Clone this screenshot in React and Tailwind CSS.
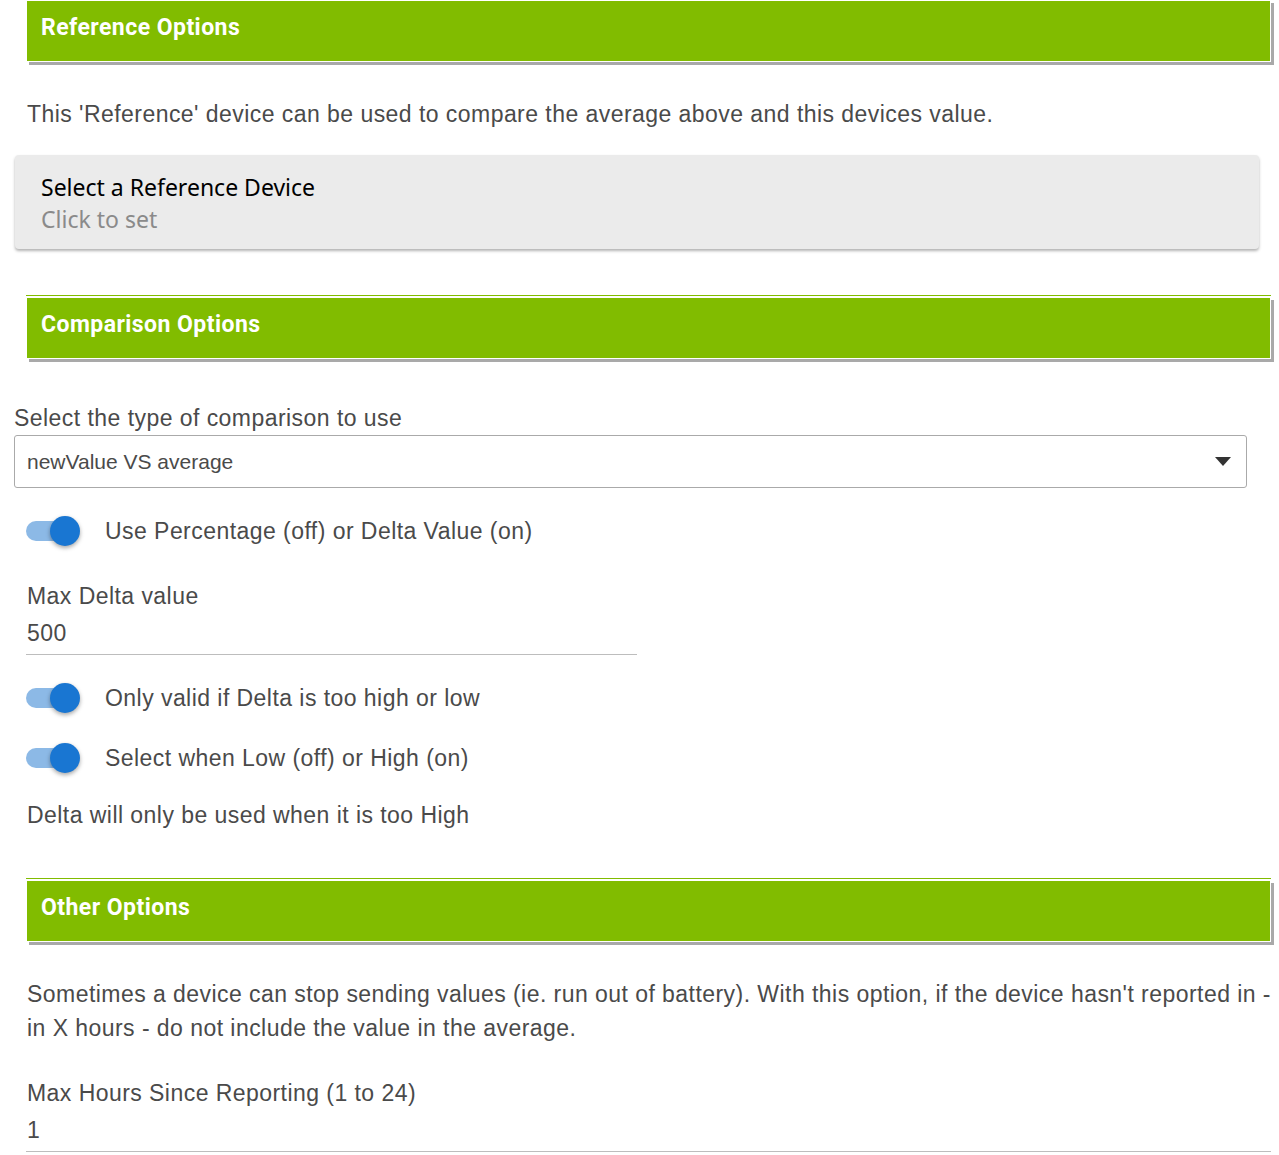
const body = { fontFamily: '"Liberation Sans", Arial, sans-serif' };

function SectionHeader({ title, className = "" }) {
  return (
    <div className={`border-t border-[#81BC00] pt-px ${className}`}>
      <div
        className="h-[62px] border border-white bg-[#81BC00] shadow-[3px_3px_0_#a9a9a9] pl-[14px] flex items-center pb-[6px] text-white font-bold text-[23px] tracking-[0.45px]"
        style={{ fontFamily: "Roboto, sans-serif" }}
      >
        {title}
      </div>
    </div>
  );
}

function Toggle({ label, className = "" }) {
  return (
    <div className={`flex items-center h-[34px] ${className}`}>
      <div className="relative w-[54px] h-[30px] ml-[26px] flex items-center shrink-0">
        <div className="w-[52px] h-[20px] rounded-full bg-[#8cb9e6]" />
        <div className="absolute left-[24px] top-0 w-[30px] h-[30px] rounded-full bg-[#1976d2] shadow-[0_2px_4px_rgba(0,0,0,0.35)]" />
      </div>
      <span className="ml-[25px] text-[23px] tracking-[0.45px] text-[#4a4a4a]">{label}</span>
    </div>
  );
}

function TextInput({ label, value, width, className = "" }) {
  return (
    <div className={`ml-[26px] ${className}`}>
      <div className="pl-px leading-[34px] text-[23px] tracking-[0.45px] text-[#4a4a4a]">{label}</div>
      <div className={`${width} pt-[3px] pb-[4px] pl-px border-b border-[#bdbdbd] leading-[34px] text-[23px] tracking-[0.45px] text-[#4a4a4a]`}>
        {value}
      </div>
    </div>
  );
}

export default function App() {
  return (
    <div className="w-[1279px] bg-white overflow-hidden" style={body}>
      <div className="ml-[26px] w-[1245px] -mt-[2px]">
        <SectionHeader title="Reference Options" />
      </div>

      <p className="mt-[35px] ml-[27px] leading-[34px] text-[23px] tracking-[0.45px] text-[#4a4a4a]">
        This 'Reference' device can be used to compare the average above and this devices value.
      </p>

      <div
        className="mt-[24px] ml-[15px] w-[1244px] h-[94px] rounded-[4px] bg-[#ebebeb] shadow-[0_2px_3px_rgba(0,0,0,0.3)] pt-[16px] pl-[26px]"
        style={{ fontFamily: '"Noto Sans", "Open Sans", sans-serif' }}
      >
        <div className="leading-[32px] text-[23px] text-black">Select a Reference Device</div>
        <div className="leading-[32px] text-[23px] text-[#8a8a8a]">Click to set</div>
      </div>

      <div className="mt-[46px] ml-[26px] w-[1245px]">
        <SectionHeader title="Comparison Options" />
      </div>

      <div className="mt-[42px] ml-[14px]">
        <div className="leading-[34px] text-[23px] tracking-[0.45px] text-[#4a4a4a]">Select the type of comparison to use</div>
        <div className="w-[1233px] h-[53px] border border-[#aaaaaa] rounded-[3px] flex items-center justify-between pl-[12px] pr-[15px]">
          <span className="text-[21px] text-[#4a4a4a]">newValue VS average</span>
          <svg width="16" height="9" viewBox="0 0 16 9">
            <path d="M0 0 L16 0 L8 9 Z" fill="#333" />
          </svg>
        </div>
      </div>

      <Toggle className="mt-[26px]" label="Use Percentage (off) or Delta Value (on)" />

      <TextInput className="mt-[31px]" label="Max Delta value" value="500" width="w-[611px]" />

      <Toggle className="mt-[26px]" label="Only valid if Delta is too high or low" />
      <Toggle className="mt-[26px]" label="Select when Low (off) or High (on)" />

      <p className="mt-[23px] ml-[27px] leading-[34px] text-[23px] tracking-[0.45px] text-[#4a4a4a]">
        Delta will only be used when it is too High
      </p>

      <div className="mt-[46px] ml-[26px] w-[1245px]">
        <SectionHeader title="Other Options" />
      </div>

      <p className="mt-[35px] ml-[27px] w-[1244px] leading-[34px] text-[23px] tracking-[0.45px] text-[#4a4a4a]">
        Sometimes a device can stop sending values (ie. run out of battery). With this option, if the device hasn't reported in - in X hours - do not include the value in the average.
      </p>

      <TextInput className="mt-[31px]" label="Max Hours Since Reporting (1 to 24)" value="1" width="w-[1245px]" />
      <div className="h-[20px]" />
    </div>
  );
}
